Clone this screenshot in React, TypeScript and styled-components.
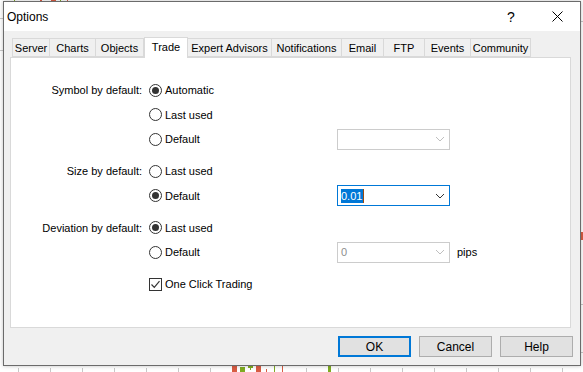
import React from 'react';
import styled, { createGlobalStyle } from 'styled-components';

const GlobalStyle = createGlobalStyle`
  html, body {
    margin: 0;
    padding: 0;
    background: #ffffff;
    font-family: "Liberation Sans", Arial, sans-serif;
    font-size: 11px;
    color: #000;
  }
  #root {
    position: relative;
    width: 583px;
    height: 372px;
    overflow: hidden;
  }
`;

const ChartLayer = styled.svg`
  position: absolute;
  left: 0;
  top: 0;
  width: 583px;
  height: 372px;
`;

const Dialog = styled.div`
  position: absolute;
  left: 3px;
  top: 1px;
  width: 576px;
  height: 363px;
  border: 1px solid #6b6b6b;
  box-shadow: 0 0 4px rgba(0, 0, 0, 0.25);
  display: flex;
  flex-direction: column;
  background: #f0f0f0;
`;

const TitleBar = styled.div`
  height: 29px;
  background: #ffffff;
  display: flex;
  align-items: center;
  padding-left: 3px;
  font-size: 12px;
`;

const TitleText = styled.span`
  flex: 1;
`;

const TitleButton = styled.div<{ $w: number }>`
  width: ${p => p.$w}px;
  height: 29px;
  display: flex;
  align-items: center;
  justify-content: center;
  font-size: 14px;
`;

const Body = styled.div`
  flex: 1;
  padding: 5px 9px 0 6px;
  display: flex;
  flex-direction: column;
`;

const TabStrip = styled.div`
  height: 21px;
  display: flex;
  align-items: flex-end;
  padding-left: 2px;
`;

const Tab = styled.div<{ $w: number; $active?: boolean }>`
  width: ${p => p.$w}px;
  height: ${p => (p.$active ? 21 : 19)}px;
  box-sizing: border-box;
  border: 1px solid #d9d9d9;
  border-left: ${p => (p.$active ? '1px solid #d9d9d9' : 'none')};
  border-bottom: ${p => (p.$active ? 'none' : '1px solid #d9d9d9')};
  background: ${p => (p.$active ? '#ffffff' : '#f0f0f0')};
  display: flex;
  align-items: ${p => (p.$active ? 'flex-start' : 'center')};
  padding-top: ${p => (p.$active ? 3 : 0)}px;
  justify-content: center;
  margin-bottom: ${p => (p.$active ? -1 : 0)}px;
  position: relative;
  z-index: ${p => (p.$active ? 1 : 0)};
  &:first-child {
    border-left: 1px solid #d9d9d9;
  }
`;

const Panel = styled.div`
  height: 271px;
  box-sizing: border-box;
  background: #ffffff;
  border: 1px solid #d9d9d9;
  padding-top: 20px;
`;

const Group = styled.div`
  margin-bottom: 7.5px;
`;

const Row = styled.div`
  height: 24.5px;
  display: grid;
  grid-template-columns: 134px 192px 113px auto;
  align-items: center;
`;

const Label = styled.div`
  text-align: right;
  padding-right: 3px;
`;

const Option = styled.div`
  display: flex;
  align-items: center;
  gap: 3px;
  padding-left: 4px;
`;

const RadioCircle = styled.span<{ $checked?: boolean }>`
  width: 13px;
  height: 13px;
  box-sizing: border-box;
  border-radius: 50%;
  border: 1px solid #333333;
  background: #ffffff;
  display: flex;
  align-items: center;
  justify-content: center;
  &::after {
    content: '';
    width: 7px;
    height: 7px;
    border-radius: 50%;
    background: ${p => (p.$checked ? '#333333' : 'transparent')};
  }
`;

const CheckBox = styled.span`
  width: 13px;
  height: 13px;
  box-sizing: border-box;
  border: 1px solid #333333;
  background: #ffffff;
  display: flex;
  align-items: center;
  justify-content: center;
`;

const Combo = styled.div<{ $active?: boolean }>`
  height: 21px;
  box-sizing: border-box;
  border: 1px solid ${p => (p.$active ? '#0078d7' : '#cccccc')};
  background: #ffffff;
  display: flex;
  align-items: center;
  padding-left: 3px;
  padding-right: 4px;
  color: ${p => (p.$active ? '#000' : '#8d8d8d')};
`;

const ComboValue = styled.div`
  flex: 1;
  display: flex;
  align-items: center;
`;

const Selected = styled.span`
  background: #0078d7;
  color: #ffffff;
  line-height: 14px;
  padding-right: 1px;
  border-right: 1px solid #9c4a10;
`;

const Suffix = styled.span`
  padding-left: 7px;
`;

const ButtonRow = styled.div`
  display: flex;
  justify-content: flex-end;
  gap: 8px;
  padding-top: 8px;
  margin-right: -2px;
`;

const Button = styled.div<{ $default?: boolean }>`
  width: 73px;
  height: 21px;
  box-sizing: border-box;
  border: ${p => (p.$default ? '2px solid #0078d7' : '1px solid #adadad')};
  background: #e1e1e1;
  display: flex;
  align-items: center;
  justify-content: center;
  font-size: 12px;
`;

const Chevron = ({ color }: { color: string }) => (
  <svg width="10" height="6" viewBox="0 0 10 6">
    <path d="M1 1 L5 5 L9 1" fill="none" stroke={color} strokeWidth="1" />
  </svg>
);

const tabs = [
  { name: 'Server', w: 38 },
  { name: 'Charts', w: 46 },
  { name: 'Objects', w: 48 },
  { name: 'Trade', w: 44, active: true },
  { name: 'Expert Advisors', w: 84 },
  { name: 'Notifications', w: 70 },
  { name: 'Email', w: 42 },
  { name: 'FTP', w: 41 },
  { name: 'Events', w: 46 },
  { name: 'Community', w: 60 },
];

const Radio = ({ label, checked }: { label: string; checked?: boolean }) => (
  <Option>
    <RadioCircle $checked={checked} />
    <span>{label}</span>
  </Option>
);

const ChartBackground = () => {
  const ticks = [];
  for (let x = 18; x < 583; x += 32) {
    ticks.push(<line key={x} x1={x + 0.5} y1={368} x2={x + 0.5} y2={372} stroke="#c8c8c8" />);
  }
  return (
    <ChartLayer>
      {ticks}
      <line x1={0} y1={18.5} x2={3} y2={18.5} stroke="#c8c8c8" />
      <line x1={0} y1={50.5} x2={3} y2={50.5} stroke="#c8c8c8" />
      <line x1={580} y1={21.5} x2={583} y2={21.5} stroke="#c8c8c8" />
      <line x1={580} y1={304.5} x2={583} y2={304.5} stroke="#c8c8c8" />
      <line x1={580} y1={352.5} x2={583} y2={352.5} stroke="#c8c8c8" />
      <rect x={580} y={232} width={3} height={8} fill="#d85c43" />
      <line x1={14.5} y1={0} x2={14.5} y2={2} stroke="#7fab22" />
      <rect x={40} y={0} width={2} height={2} fill="#d85c43" />
      <rect x={51} y={0} width={5} height={2} fill="#d85c43" />
      <line x1={60.5} y1={0} x2={60.5} y2={2} stroke="#7fab22" />
      <line x1={67.5} y1={0} x2={67.5} y2={2} stroke="#d85c43" />
      <rect x={232} y={366} width={5} height={6} fill="#d85c43" />
      <rect x={240} y={367} width={5} height={5} fill="#7fab22" />
      <rect x={248} y={366} width={5} height={2} fill="#7fab22" />
      <line x1={250.5} y1={366} x2={250.5} y2={370} stroke="#7fab22" />
      <rect x={256} y={366} width={5} height={6} fill="#d85c43" />
      <line x1={266.5} y1={369} x2={266.5} y2={372} stroke="#d85c43" />
      <line x1={274.5} y1={366} x2={274.5} y2={372} stroke="#7fab22" />
      <line x1={282.5} y1={366} x2={282.5} y2={372} stroke="#d85c43" />
      <rect x={328} y={366} width={3} height={6} fill="#7fab22" />
    </ChartLayer>
  );
};

export default function App() {
  return (
    <>
      <GlobalStyle />
      <ChartBackground />
      <Dialog>
        <TitleBar>
          <TitleText>Options</TitleText>
          <TitleButton $w={46}>?</TitleButton>
          <TitleButton $w={46}>
            <svg width="11" height="11" viewBox="0 0 11 11">
              <path d="M0.5 0.5 L10.5 10.5 M10.5 0.5 L0.5 10.5" stroke="#000" strokeWidth="1" />
            </svg>
          </TitleButton>
        </TitleBar>
        <Body>
          <TabStrip>
            {tabs.map(t => (
              <Tab key={t.name} $w={t.w} $active={t.active}>
                {t.name}
              </Tab>
            ))}
          </TabStrip>
          <Panel>
            <Group>
              <Row>
                <Label>Symbol by default:</Label>
                <Radio label="Automatic" checked />
              </Row>
              <Row>
                <span />
                <Radio label="Last used" />
              </Row>
              <Row>
                <span />
                <Radio label="Default" />
                <Combo>
                  <ComboValue />
                  <Chevron color="#bfbfbf" />
                </Combo>
              </Row>
            </Group>
            <Group>
              <Row>
                <Label>Size by default:</Label>
                <Radio label="Last used" />
              </Row>
              <Row>
                <span />
                <Radio label="Default" checked />
                <Combo $active>
                  <ComboValue>
                    <Selected>0.01</Selected>
                  </ComboValue>
                  <Chevron color="#333333" />
                </Combo>
              </Row>
            </Group>
            <Group>
              <Row>
                <Label>Deviation by default:</Label>
                <Radio label="Last used" checked />
              </Row>
              <Row>
                <span />
                <Radio label="Default" />
                <Combo>
                  <ComboValue>0</ComboValue>
                  <Chevron color="#bfbfbf" />
                </Combo>
                <Suffix>pips</Suffix>
              </Row>
            </Group>
            <Row>
              <span />
              <Option>
                <CheckBox>
                  <svg width="9" height="9" viewBox="0 0 9 9">
                    <path d="M0.5 4.5 L3.3 7.3 L8.5 1.2" fill="none" stroke="#333" strokeWidth="1.2" />
                  </svg>
                </CheckBox>
                <span>One Click Trading</span>
              </Option>
            </Row>
          </Panel>
          <ButtonRow>
            <Button $default>OK</Button>
            <Button>Cancel</Button>
            <Button>Help</Button>
          </ButtonRow>
        </Body>
      </Dialog>
    </>
  );
}
